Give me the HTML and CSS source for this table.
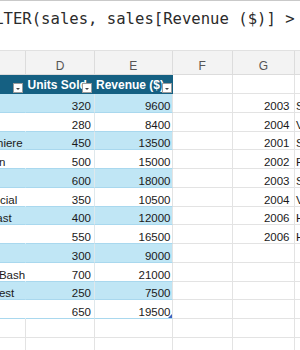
FILE: index.html
```html
<!DOCTYPE html>
<html>
<head>
    <title>Sheet - FILTER</title>
    <link rel="stylesheet" href="styles.css">
</head>
<body>
    <div class="formula-bar">
        <span class="formula">=FILTER(sales, sales[Revenue ($)] &gt; 10000)</span>
    </div>

    <div class="sheet">
        <div class="row col-heads">
            <div class="cell">C</div>
            <div class="cell">D</div>
            <div class="cell">E</div>
            <div class="cell">F</div>
            <div class="cell">G</div>
            <div class="cell">H</div>
        </div>

        <div class="row thead">
            <div class="cell t name">Product<span class="filter"></span></div>
            <div class="cell t units">Units Sold<span class="filter"></span></div>
            <div class="cell t rev">Revenue ($)<span class="filter edge"></span></div>
            <div class="cell"></div>
            <div class="cell"></div>
            <div class="cell"></div>
        </div>

        <div class="row band">
            <div class="cell t name">Spring Sale</div>
            <div class="cell t units">320</div>
            <div class="cell t rev">9600</div>
            <div class="cell"></div>
            <div class="cell year">2003</div>
            <div class="cell title">Seabiscuit</div>
        </div>
        <div class="row">
            <div class="cell t name">Flash Sale</div>
            <div class="cell t units">280</div>
            <div class="cell t rev">8400</div>
            <div class="cell"></div>
            <div class="cell year">2004</div>
            <div class="cell title">Vanity Fair</div>
        </div>
        <div class="row band">
            <div class="cell t name">Seasons Premiere</div>
            <div class="cell t units">450</div>
            <div class="cell t rev">13500</div>
            <div class="cell"></div>
            <div class="cell year">2001</div>
            <div class="cell title">Shrek</div>
        </div>
        <div class="row">
            <div class="cell t name">Winter Fashion</div>
            <div class="cell t units">500</div>
            <div class="cell t rev">15000</div>
            <div class="cell"></div>
            <div class="cell year">2002</div>
            <div class="cell title">Frida</div>
        </div>
        <div class="row band">
            <div class="cell t name">Clearance</div>
            <div class="cell t units">600</div>
            <div class="cell t rev">18000</div>
            <div class="cell"></div>
            <div class="cell year">2003</div>
            <div class="cell title">School of Rock</div>
        </div>
        <div class="row">
            <div class="cell t name">Weekend Special</div>
            <div class="cell t units">350</div>
            <div class="cell t rev">10500</div>
            <div class="cell"></div>
            <div class="cell year">2004</div>
            <div class="cell title">Van Helsing</div>
        </div>
        <div class="row band">
            <div class="cell t name">Christmas Feast</div>
            <div class="cell t units">400</div>
            <div class="cell t rev">12000</div>
            <div class="cell"></div>
            <div class="cell year">2006</div>
            <div class="cell title">Happy Feet</div>
        </div>
        <div class="row">
            <div class="cell t name">Black Friday</div>
            <div class="cell t units">550</div>
            <div class="cell t rev">16500</div>
            <div class="cell"></div>
            <div class="cell year">2006</div>
            <div class="cell title">Hoot</div>
        </div>
        <div class="row band">
            <div class="cell t name">Gift Cards</div>
            <div class="cell t units">300</div>
            <div class="cell t rev">9000</div>
            <div class="cell"></div>
            <div class="cell"></div>
            <div class="cell"></div>
        </div>
        <div class="row">
            <div class="cell t name">Homecoming Bash</div>
            <div class="cell t units">700</div>
            <div class="cell t rev">21000</div>
            <div class="cell"></div>
            <div class="cell"></div>
            <div class="cell"></div>
        </div>
        <div class="row band">
            <div class="cell t name">Summer Harvest</div>
            <div class="cell t units">250</div>
            <div class="cell t rev">7500</div>
            <div class="cell"></div>
            <div class="cell"></div>
            <div class="cell"></div>
        </div>
        <div class="row">
            <div class="cell t name">Open House</div>
            <div class="cell t units">650</div>
            <div class="cell t rev handle">19500</div>
            <div class="cell"></div>
            <div class="cell"></div>
            <div class="cell"></div>
        </div>

        <div class="row">
            <div class="cell"></div>
            <div class="cell"></div>
            <div class="cell"></div>
            <div class="cell"></div>
            <div class="cell"></div>
            <div class="cell"></div>
        </div>
        <div class="row">
            <div class="cell"></div>
            <div class="cell"></div>
            <div class="cell"></div>
            <div class="cell"></div>
            <div class="cell"></div>
            <div class="cell"></div>
        </div>
    </div>
</body>
</html>
```

FILE: styles.css
```css
:root {
    --accent: #156082;
    --band: #c0e6f5;
    --grid: #e3e3e3;
    --row-line: #a9d8ee;
    --text: #1a1a1a;
}

* {
    margin: 0;
    padding: 0;
    box-sizing: border-box;
}

body {
    width: 300px;
    height: 350px;
    overflow: hidden;
    background: #fff;
    color: var(--text);
    font-family: 'Liberation Sans', Arial, sans-serif;
}

.formula-bar {
    height: 51px;
    border-top: 1px solid #c9c9c9;
    border-bottom: 1px solid #e1e1e1;
    padding-top: 8.5px;
    white-space: nowrap;
    overflow: hidden;
    font-family: 'DejaVu Sans Mono', monospace;
    font-size: 15.6px;
    color: #2b2b2b;
}

.formula {
    display: inline-block;
    margin-left: -34px;
}

/* column C is mostly scrolled out of view */
.sheet {
    margin-left: -74px;
    width: 469px;
}

.row {
    display: grid;
    grid-template-columns: 100px 69px 77.5px 60.5px 62px 100px;
    height: 18.75px;
}

.cell {
    position: relative;
    display: flex;
    align-items: flex-end;
    padding: 0 2px;
    border-right: 1px solid var(--grid);
    border-bottom: 1px solid var(--grid);
    white-space: nowrap;
    overflow: hidden;
    font-size: 11.5px;
}

.col-heads {
    height: 24.25px;
    background: #f3f3f3;
}

.col-heads .cell {
    justify-content: center;
    padding-bottom: 1px;
    color: #555;
    font-size: 12px;
    border-color: #dcdcdc;
}

/* table cells */
.t {
    border-bottom-color: var(--row-line);
}

.band .t {
    background: var(--band);
}

.t.name {
    border-right-color: transparent;
}

.t.units {
    justify-content: flex-end;
    padding-right: 3px;
    border-right-color: #dfe8ec;
}

.t.rev {
    justify-content: flex-end;
    padding-right: 1px;
}

.thead .t {
    justify-content: flex-start;
    padding-left: 1.5px;
    padding-bottom: 1px;
    background: var(--accent);
    border-color: var(--accent);
    color: #fff;
    font-weight: bold;
    font-size: 12px;
}

.thead .t.rev {
    padding-left: 1px;
}

.filter {
    position: absolute;
    right: 2px;
    bottom: 0;
    width: 10px;
    height: 10px;
    background: #fff;
    border: 1px solid #9c9c9c;
}

.filter.edge {
    right: 0;
}

.filter::after {
    content: '';
    position: absolute;
    left: 2px;
    top: 3.5px;
    border-left: 2.5px solid transparent;
    border-right: 2.5px solid transparent;
    border-top: 2.5px solid #444;
}

.handle::after {
    content: '';
    position: absolute;
    right: 0;
    bottom: 0;
    border-left: 4px solid transparent;
    border-bottom: 4px solid #3a62c0;
}

.year {
    justify-content: flex-end;
    padding-right: 4.5px;
}

.title {
    padding-left: 1px;
}
```
